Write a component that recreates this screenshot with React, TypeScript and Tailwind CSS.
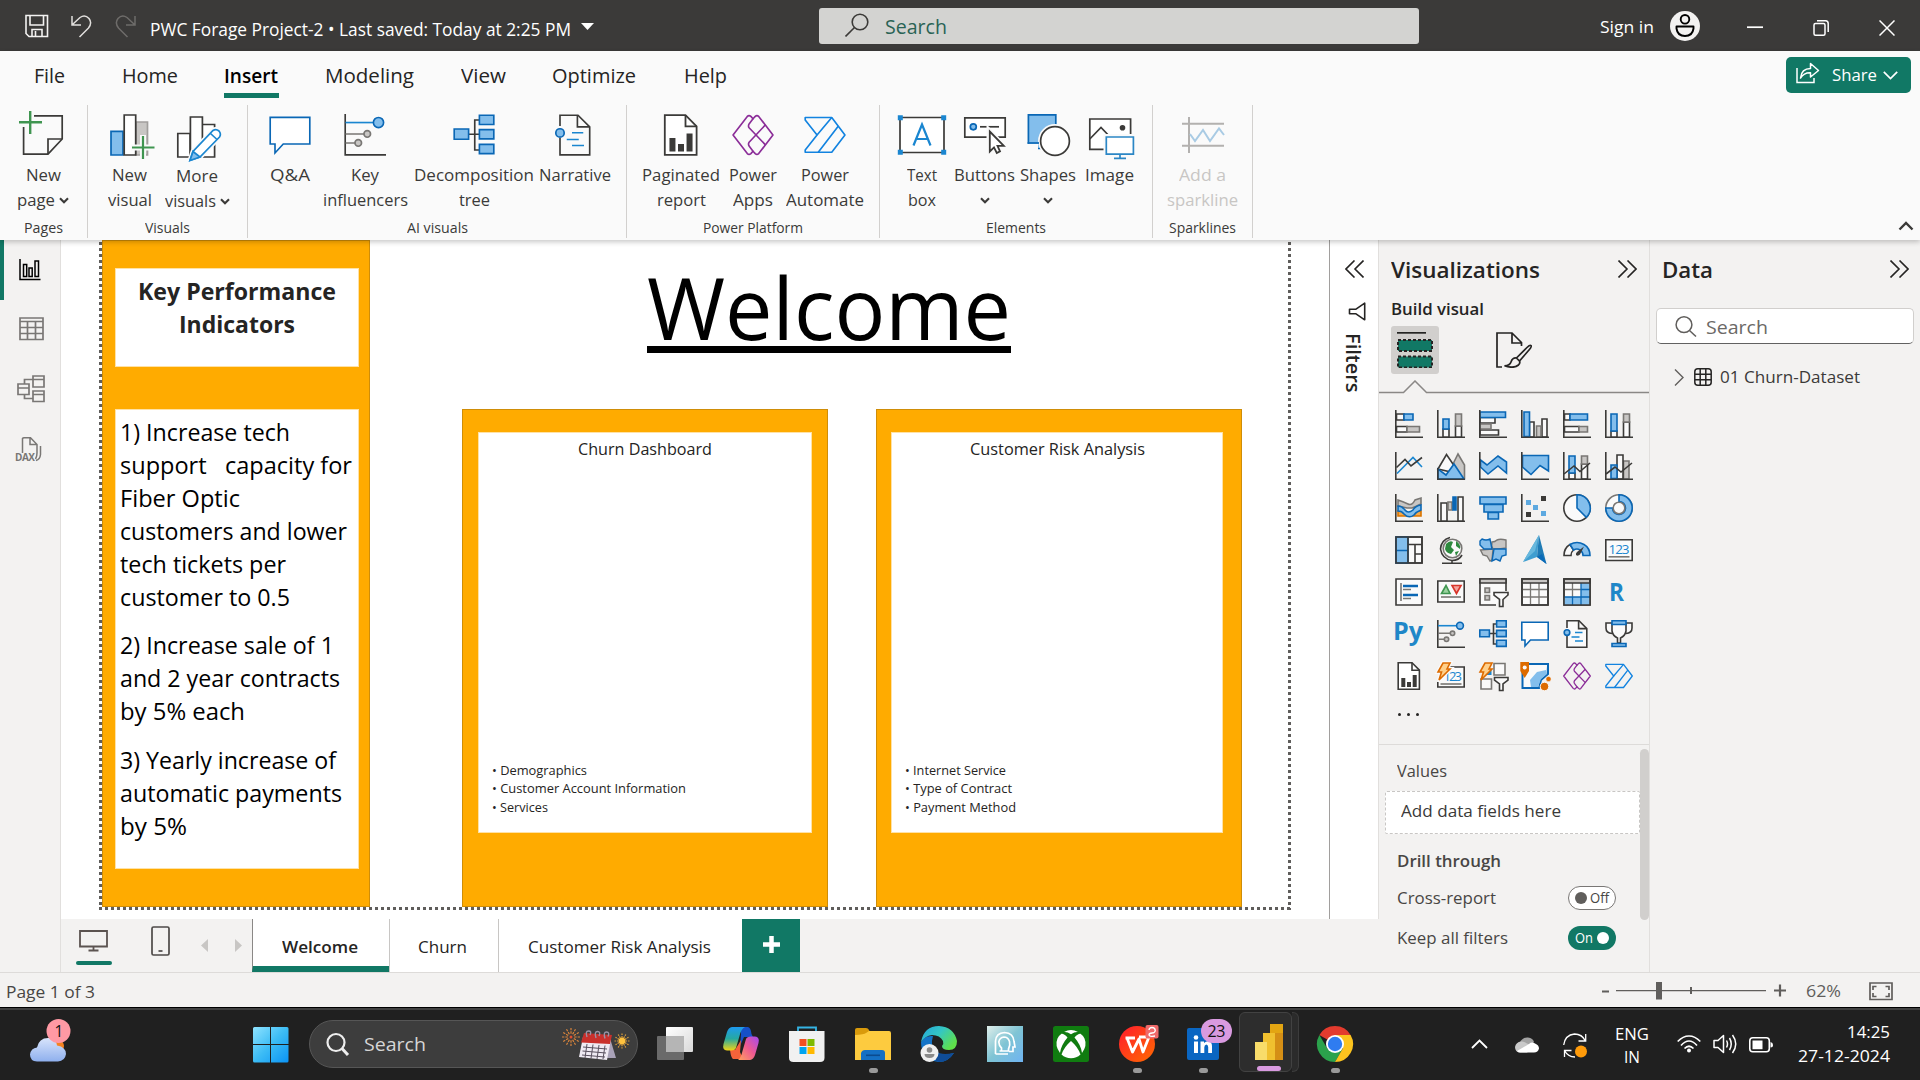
import React, { useLayoutEffect, useRef, useState } from "react";

const K = "#3b3a38";
const B = "#0a67b5";
const F = "#83beec";
const G = "#797774";
const GF = "#c8c6c4";
const W = "#fafafa";

/* Text condensed to a given width in pixels. */
function T({ w, className = "", children }: { w: number; className?: string; children: React.ReactNode }) {
  const ref = useRef<HTMLSpanElement>(null);
  const [scale, setScale] = useState(1);
  useLayoutEffect(() => {
    if (ref.current) {
      const natural = ref.current.getBoundingClientRect().width;
      if (natural > 0) setScale(w / natural);
    }
  }, []);
  return (
    <span className={"block shrink-0 whitespace-pre " + className} style={{ width: w }}>
      <span ref={ref} className="inline-block origin-left" style={{ transform: `scaleX(${scale})` }}>
        {children}
      </span>
    </span>
  );
}

type IconProps = { size?: number; sw?: number };

function Svg({ size = 28, sw = 1.6, children }: IconProps & { children: React.ReactNode }) {
  return (
    <svg width={size} height={size} viewBox="0 0 28 28" fill="none" stroke={K} strokeWidth={sw} className="block shrink-0 overflow-visible">
      {children}
    </svg>
  );
}

const axis = <path d="M.8 0V27.2H28" />;

/* ---- icons shared by the ribbon and the visual gallery ---- */
function QnA(p: IconProps) {
  return (
    <Svg {...p}>
      <path d="M.8 2.2H27.2V20H9.5L4 26V20H.8Z" stroke={B} fill="#fff" />
    </Svg>
  );
}
function KeyInfluencers(p: IconProps) {
  return (
    <Svg {...p}>
      {axis}
      <path d="M1 5.7H20" stroke="#1a86d0" />
      <path d="M1 13.3H14M1 19.3H8" stroke={G} />
      <circle cx="23" cy="5.7" r="3.4" stroke={B} fill={F} />
      <circle cx="15.5" cy="13.3" r="2.2" stroke={G} fill={GF} />
      <circle cx="9.5" cy="19.3" r="2.2" stroke={G} fill={GF} />
    </Svg>
  );
}
function Decomposition(p: IconProps) {
  return (
    <Svg {...p}>
      <path d="M10 13.5H18M18 4H14.5V24H18" />
      <g stroke={B} fill={F}>
        <path d="M.8 10H10.4V16.8H.8ZM17.6.8H27.2V7H17.6ZM17.6 10.4H27.2V16.6H17.6ZM17.6 20.2H27.2V26.4H17.6Z" />
      </g>
    </Svg>
  );
}
function Narrative(p: IconProps) {
  return (
    <Svg {...p}>
      <path d="M4 8V.8H16L23.8 8.6V27.2H4V16" fill={W} />
      <path d="M15.6.8V8.6H23.8" />
      <path d="M12 12.5H19.5M8.5 17H16.5M12 21H20" stroke="#1a86d0" />
      <circle cx="4" cy="12.6" r="2.8" stroke={B} fill={F} />
    </Svg>
  );
}
function Paginated(p: IconProps) {
  return (
    <Svg {...p}>
      <path d="M3.2.8H17L24.4 8.2V27.2H3.2Z" fill="#fff" />
      <path d="M17 .8V8.2H24.4" />
      <path d="M6.3 16H10.3V25H6.3ZM12 20H16V25H12ZM17.7 13H21.7V25H17.7Z" fill={K} stroke="none" />
    </Svg>
  );
}
function PowerApps(p: IconProps) {
  return (
    <Svg {...p}>
      <g stroke="#8b2d98" strokeLinejoin="round">
        <path d="M.7 14 10.2 1.6Q11.3.5 12.6 1.6L14 3.2 15.5 1.6Q16.6.5 17.8 1.6L27.3 14 17.8 26.4Q16.6 27.5 15.5 26.4L14 24.8 12.6 26.4Q11.3 27.5 10.2 26.4Z" />
        <path d="M14 3.2 11.4 6.6Q10.6 8 11.4 9.2L22.3 20.6M14 24.8 11.4 21.4Q10.6 20 11.4 18.8L22.3 7.2" />
      </g>
    </Svg>
  );
}
function PowerAutomate(p: IconProps) {
  return (
    <Svg {...p}>
      <g stroke="#1283e0" strokeLinejoin="round">
        <path d="M.8 2.3H18.5L27.3 14 18.5 25.5H.8V24L8.7 14 .8 4Z" />
        <path d="M8.7 14 18.5 2.3M9.5 25.5 22.8 8.2" />
      </g>
    </Svg>
  );
}

/* ---- ribbon icons, 48px ---- */
function R48({ children }: { children: React.ReactNode }) {
  return (
    <svg width="48" height="48" viewBox="0 0 48 48" fill="none" stroke={K} strokeWidth="1.7" className="block overflow-visible">
      {children}
    </svg>
  );
}
const at42 = (icon: React.ReactNode) => <div className="pt-[3px]">{icon}</div>;

const NewPage = () => (
  <R48>
    <path d="M15 4.8H43.2V28L29 43.2H4.6V16" />
    <path d="M29 43V28H43" />
    <path d="M11.2 0V23M0 11.3H23" stroke="#3f9550" strokeWidth="2.4" />
  </R48>
);
const NewVisual = () => (
  <R48>
    <path d="M30 11H41.5V44H30Z" stroke="#a19f9d" fill={GF} />
    <path d="M5 20.3H17V44H5Z" stroke={B} fill={F} />
    <path d="M18.2 4H29.7V44H18.2Z" fill="#fff" />
    <path d="M37 24V49M25 36.5H49" stroke={W} strokeWidth="6" />
    <path d="M37 25V48M26 36.5H48.5" stroke="#3f9550" strokeWidth="2.2" />
  </R48>
);
const MoreVisuals = () => (
  <R48>
    <path d="M4.8 21.5H17V45H4.8ZM17.4 5H29.4V45H17.4ZM29.4 12.5H41.6V45H29.4" fill="#fff" />
    <path d="M17 48.5 20 39.5 40 18.5Q43 16.5 46 19 48.5 22 46.5 25L27 45Z" stroke={W} strokeWidth="5" />
    <path d="M17 48.5 20 39.5 40 18.5Q43 16.5 46 19 48.5 22 46.5 25L27 45Z" stroke="#1a86d0" fill="#fff" />
    <path d="M17 48.5 20 39.5 27 45Z" fill={F} stroke="#1a86d0" />
    <path d="M37.5 21.5 44 27.5" stroke="#1a86d0" />
  </R48>
);
const TextBox = () => (
  <R48>
    <path d="M2 6.5H46V41.5H2Z" fill="#fff" />
    <path d="M-.2 4.3H4.8V9.3H-.2ZM43.2 4.3H48.2V9.3H43.2ZM-.2 38.7H4.8V43.7H-.2ZM43.2 38.7H48.2V43.7H43.2Z" fill="#1a86d0" stroke="none" />
    <path d="M15.5 34.5 24 13.5 32.5 34.5M18.3 28H29.7" stroke="#1a86d0" strokeWidth="2.2" />
  </R48>
);
const ButtonsIcon = () => (
  <R48>
    <path d="M3.8 6.8H44.2V26.2H3.8Z" fill="#fff" />
    <circle cx="12.3" cy="15.8" r="3" stroke={B} fill={F} />
    <path d="M19 15.8H38" />
    <path d="M28 19.5V41.5L33 36.8 36 42.5 39.5 40.5 36.8 35.2H43Z" fill="#fff" stroke={W} strokeWidth="5" />
    <path d="M28.8 20.5V40.5L33 36.4 35.8 42 39 40.4 36.5 34.8H42.8Z" fill="#fff" strokeWidth="1.8" />
  </R48>
);
const ShapesIcon = () => (
  <R48>
    <path d="M4.4 3.8H31.8V37.5H4.4Z" stroke={B} fill={F} />
    <circle cx="31" cy="30" r="14.4" fill="#fff" stroke={W} strokeWidth="5" />
    <path d="M0 32.8H14V42H0Z" fill={W} stroke="none" />
    <path d="M3.6 32H15" stroke={B} />
    <circle cx="31" cy="30" r="14.4" fill="#fff" />
  </R48>
);
const ImageIcon = () => (
  <R48>
    <path d="M3.8 8H44.6V38.3H3.8Z" fill="#fff" />
    <path d="M3.8 28 15 16.5 27 29" />
    <circle cx="36.5" cy="16.7" r="2.8" fill={K} stroke="none" />
    <path d="M20 25.5H47.5V43.5H20Z" fill="#fff" stroke={W} strokeWidth="5" />
    <path d="M20.3 26H47.4V43.2H20.3ZM34 43V47M28 47.3H40" fill="#fff" stroke="#2b86c5" />
  </R48>
);
const Sparkline = () => (
  <R48>
    <path d="M10 6V42M3 12.7H45M3 34.7H45" stroke="#b3b1af" strokeWidth="2" />
    <path d="M11 23 16 30 24 19 31 30 40 17.5 45 24" stroke="#a9cbe4" strokeWidth="2" />
  </R48>
);

function Chev({ className = "" }: { className?: string }) {
  return (
    <svg width="10" height="7" viewBox="0 0 10 7" fill="none" stroke={K} strokeWidth="2.1" className={"block shrink-0 " + className}>
      <path d="M1 1.2 5 5.2 9 1.2" />
    </svg>
  );
}

type ItemProps = {
  className: string;
  icon: React.ReactNode;
  a: string;
  aw: number;
  b?: string;
  bw?: number;
  chev?: boolean;
  low?: boolean;
};
function Item({ className, icon, a, aw, b, bw = 0, chev, low }: ItemProps) {
  return (
    <div className={"flex shrink-0 flex-col items-center text-[17px] leading-6 " + (low ? "pt-px " : "") + className}>
      <div className="flex h-[52px] w-12 justify-center">{icon}</div>
      <T w={aw}>{a}</T>
      <div className="flex h-[25px] items-center">
        {b && <T w={bw}>{b}</T>}
        {chev && <Chev className={b ? "mt-[2px] ml-1" : "mt-[2px]"} />}
      </div>
    </div>
  );
}
function Group({ className, label, lw, children }: { className: string; label: string; lw: number; children: React.ReactNode }) {
  return (
    <div className={"flex h-[133px] shrink-0 flex-col items-center border-r border-[#d2d0ce] " + className}>
      <div className="flex h-[114px] w-full pt-[6px]">{children}</div>
      <T w={lw} className="text-[14.5px] leading-5">{label}</T>
    </div>
  );
}

function TitleBar() {
  return (
    <header className="flex h-[51px] items-start bg-[#3b3a39] text-white">
      <svg width="24" height="24" viewBox="0 0 24 24" className="mt-[14px] ml-[25px] shrink-0" fill="none" stroke="#f3f2f1" strokeWidth="1.6">
        <path d="M1 1.5H22.5V22.5H4L1 19.5ZM5 1.5V11H18.5V1.5M7 22.5V15.5H17V22.5M10.5 17V22" />
      </svg>
      <svg width="22" height="24" viewBox="0 0 22 24" className="mt-[14px] ml-[22px] shrink-0" fill="none" stroke="#e1dfdd" strokeWidth="1.5">
        <path d="M1 2V11H10M1.5 10.5 9 3.5Q14 0 18 4.5 21.5 9 17.5 14L8.5 23" />
      </svg>
      <svg width="22" height="24" viewBox="0 0 22 24" className="mt-[14px] ml-[21px] shrink-0" fill="none" stroke="#6e6c6a" strokeWidth="1.5">
        <path d="M21 2V11H12M20.5 10.5 13 3.5Q8 0 4 4.5.5 9 4.5 14L13.5 23" />
      </svg>
      <T w={421} className="mt-[17px] ml-[14px] text-[17.5px] leading-6">PWC Forage Project-2 • Last saved: Today at 2:25 PM</T>
      <svg width="13" height="8" viewBox="0 0 13 8" className="mt-[23px] ml-[10px] shrink-0"><path d="M0 0H13L6.5 7Z" fill="#fff" /></svg>
      <div className="mt-2 ml-[225px] flex h-9 w-[600px] shrink-0 rounded-[3px] bg-[#d3d3d1]">
        <svg width="24" height="24" viewBox="0 0 24 24" className="mt-[5px] ml-[26px]" fill="none" stroke={K} strokeWidth="1.6">
          <circle cx="15" cy="9" r="7.8" /><path d="M9.5 14.5.5 23.5" />
        </svg>
        <T w={62} className="mt-[7px] ml-[16px] text-[19.5px] leading-6 text-[#2a6355]">Search</T>
      </div>
      <T w={54} className="mt-[15px] ml-[181px] text-[17px] leading-6">Sign in</T>
      <svg width="30" height="30" viewBox="0 0 30 30" className="mt-[11px] ml-4 shrink-0" fill="none" stroke="#000" strokeWidth="1.9">
        <circle cx="15" cy="15" r="15" fill="#f3f2f1" stroke="none" />
        <circle cx="15" cy="8.3" r="4.3" />
        <path d="M6.5 15.5H23.5V17.5Q22.5 25 15 25T6.5 17.5Z" strokeLinejoin="round" />
      </svg>
      <svg width="16" height="16" viewBox="0 0 16 16" className="mt-5 ml-[47px] shrink-0"><path d="M0 7.2H16" stroke="#fff" strokeWidth="1.7" /></svg>
      <svg width="16" height="16" viewBox="0 0 16 16" className="mt-5 ml-[50px] shrink-0" fill="none" stroke="#fff" strokeWidth="1.5">
        <rect x="1" y="3.5" width="11" height="11.7" rx="1.5" /><path d="M4 .8H12.5Q15.2 1 15.2 3.5V12" />
      </svg>
      <svg width="16" height="16" viewBox="0 0 16 16" className="mt-5 ml-[50px] shrink-0"><path d="M.5.5 15.5 15.5M15.5.5.5 15.5" stroke="#fff" strokeWidth="1.5" /></svg>
    </header>
  );
}

function Tabs() {
  return (
    <nav className="flex h-[54px] items-start pt-[11px] text-[19.5px] leading-7 text-[#252423]">
      <T w={31} className="ml-[34px]">File</T>
      <T w={56} className="ml-[57px]">Home</T>
      <div className="ml-[46px]">
        <T w={54} className="font-semibold text-black">Insert</T>
        <div className="mt-[3px] h-[5px] w-[55px] bg-[#117865]" />
      </div>
      <T w={89} className="ml-[46px]">Modeling</T>
      <T w={45} className="ml-[47px]">View</T>
      <T w={84} className="ml-[46px]">Optimize</T>
      <T w={43} className="ml-[48px]">Help</T>
      <div className="-mt-[5px] mr-[9px] ml-auto flex h-9 w-[125px] items-center rounded-[5px] bg-[#117865] text-white">
        <svg width="24" height="22" viewBox="0 0 24 22" className="mb-1 ml-[10px]" fill="none" stroke="#fff" strokeWidth="1.5">
          <path d="M1 6V20.5H18V16" /><path d="M4.5 16Q5.5 6.5 14.5 6.5V1.5L22.5 8.5 14.5 15V10.8Q8 10.5 4.5 16Z" strokeLinejoin="round" />
        </svg>
        <T w={45} className="ml-3 text-[17px]">Share</T>
        <svg width="15" height="9" viewBox="0 0 15 9" className="ml-[6px]" fill="none" stroke="#fff" strokeWidth="1.7"><path d="M.8.8 7.5 7.5 14.2.8" /></svg>
      </div>
    </nav>
  );
}

function Ribbon() {
  return (
    <div className="relative z-10 flex h-[189px] flex-col bg-[#fafafa] text-[#3b3a39] shadow-[0_2px_5px_rgba(0,0,0,0.22)]">
      <Tabs />
      <div className="flex">
        <Group className="w-[88px]" label="Pages" lw={39}>
          <Item className="w-[86px]" icon={<NewPage />} a="New" aw={35} b="page" bw={38} chev />
        </Group>
        <Group className="w-[160px]" label="Visuals" lw={45}>
          <Item className="ml-2 w-[67px]" icon={<NewVisual />} a="New" aw={35} b="visual" bw={44} />
          <Item className="w-[68px]" icon={<MoreVisuals />} a="More" aw={42} b="visuals" bw={51} chev low />
        </Group>
        <Group className="w-[379px]" label="AI visuals" lw={61}>
          <Item className="ml-4 w-[51px]" icon={at42(<QnA size={42} sw={1.1} />)} a="Q&A" aw={40} />
          <Item className="w-[100px]" icon={at42(<KeyInfluencers size={42} sw={1.1} />)} a="Key" aw={28} b="influencers" bw={85} />
          <Item className="w-[118px]" icon={at42(<Decomposition size={42} sw={1.1} />)} a="Decomposition" aw={120} b="tree" bw={31} />
          <Item className="w-[84px]" icon={at42(<Narrative size={42} sw={1.1} />)} a="Narrative" aw={72} />
        </Group>
        <Group className="w-[253px]" label="Power Platform" lw={100}>
          <Item className="ml-[9px] w-[90px]" icon={at42(<Paginated size={42} sw={1.2} />)} a="Paginated" aw={78} b="report" bw={49} />
          <Item className="w-[54px]" icon={at42(<PowerApps size={42} sw={1.1} />)} a="Power" aw={48} b="Apps" bw={40} />
          <Item className="w-[90px]" icon={at42(<PowerAutomate size={42} sw={1.1} />)} a="Power" aw={48} b="Automate" bw={78} />
        </Group>
        <Group className="w-[273px]" label="Elements" lw={60}>
          <Item className="ml-4 w-[52px]" icon={<TextBox />} a="Text" aw={30} b="box" bw={28} />
          <Item className="w-[73px]" icon={<ButtonsIcon />} a="Buttons" aw={61} chev />
          <Item className="w-[54px]" icon={<ShapesIcon />} a="Shapes" aw={56} chev />
          <Item className="w-[69px]" icon={<ImageIcon />} a="Image" aw={49} />
        </Group>
        <Group className="w-[100px]" label="Sparklines" lw={67}>
          <Item className="w-[99px] text-[#c8c6c4]" icon={<Sparkline />} a="Add a" aw={47} b="sparkline" bw={71} />
        </Group>
        <svg width="16" height="10" viewBox="0 0 16 10" className="mt-[116px] mr-[6px] ml-auto" fill="none" stroke={K} strokeWidth="2.4"><path d="M1.5 8.5 8 2 14.5 8.5" /></svg>
      </div>
    </div>
  );
}

function Rail() {
  return (
    <aside className="flex w-[61px] shrink-0 border-r border-[#e1dfdd] bg-[#f3f2f1]">
      <div className="h-[60px] w-1 bg-[#117865]" />
      <div className="ml-3 flex w-[30px] flex-col items-center">
        <svg width="22" height="22" viewBox="0 0 22 22" className="mt-[19px] mr-[2px]" fill="none" stroke="#000" strokeWidth="1.5">
          <path d="M1 0V20.5H21.5M4.5 5.5H7.7V17.5H4.5ZM10 9H13.2V17.5H10ZM16 2H19.5V17.5H16Z" />
        </svg>
        <svg width="25" height="24" viewBox="0 0 25 24" className="mt-[36px]" fill="none" stroke="#797775" strokeWidth="1.7">
          <path d="M1 1H24V22.5H1ZM1 4.5H24M1 10.5H24M1 16.5H24M8.5 4.5V22.5M16.5 4.5V22.5" />
        </svg>
        <svg width="28" height="28" viewBox="0 0 28 28" className="mt-[34px]" fill="none" stroke="#797775" strokeWidth="1.7">
          <path d="M16 1H27V12H16ZM16 4.5H27M16 16H27V26.5H16ZM16 19.5H27M1 9H12V19.5H1ZM1 13H12M7.5 9V4.5H16M7.5 19.5V23.5H16" />
        </svg>
        <svg width="28" height="27" viewBox="0 0 28 27" className="mt-[34px] mr-1 overflow-visible" fill="none" stroke="#797775" strokeWidth="1.5">
          <path d="M7.5 16V1.5Q8 .8 9 .8H15.5L22 7.5V16Q22 19.5 20.5 22M15 1V7.5H22M25.5 9V17.5Q25 22.5 21 23.5" />
          <text x="0" y="24" fontSize="10" fontWeight="700" textLength="20" fill="#797775" stroke="none">DAX</text>
        </svg>
      </div>
    </aside>
  );
}

type CardProps = { className: string; inner: string; title: string; tw: number; bullets: [string, number][] };
function Card({ className, inner, title, tw, bullets }: CardProps) {
  return (
    <div className={"absolute top-[169px] h-[498px] border border-[#cf8d08] bg-[#ffab00] pt-[22px] " + className}>
      <div className={"flex h-[401px] flex-col items-center border border-[#ffe2a6] bg-white text-[#252423] " + inner}>
        <T w={tw} className="mt-[4px] text-[16.5px] leading-6">{title}</T>
        <div className="mt-auto mb-[16px] w-full pl-[13px] text-[13px] leading-[18.5px]">
          {bullets.map(([b, w]) => (
            <T key={b} w={w}>{"• " + b}</T>
          ))}
        </div>
      </div>
    </div>
  );
}

const kpis: [string, number][][] = [
  [["1) Increase tech", 170], ["support   capacity for", 232], ["Fiber Optic", 120], ["customers and lower", 227], ["tech tickets per", 166], ["customer to 0.5", 170]],
  [["2) Increase sale of 1", 214], ["and 2 year contracts", 220], ["by 5% each", 125]],
  [["3) Yearly increase of", 216], ["automatic payments", 222], ["by 5%", 67]],
];

function Canvas() {
  return (
    <div className="relative h-[679px] overflow-hidden bg-white">
      <div className="absolute top-[2px] left-[38px] h-[668px] w-[3px] bg-[repeating-linear-gradient(180deg,#5f5d5b_0_3px,transparent_3px_6px)]" />
      <div className="absolute top-[2px] left-[1227px] h-[668px] w-[3px] bg-[repeating-linear-gradient(180deg,#5f5d5b_0_3px,transparent_3px_6px)]" />
      <div className="absolute top-[667px] left-[38px] h-[3px] w-[1192px] bg-[repeating-linear-gradient(90deg,#5f5d5b_0_3px,transparent_3px_6px)]" />

      <div className="absolute top-0 left-[41px] h-[667px] w-[268px] border border-[#cf8d08] bg-[#ffab00] pt-[27px] pl-3">
        <div className="flex h-[99px] w-[244px] flex-col items-center border border-[#ffe2a6] bg-white pt-[5px] text-[24px] leading-[33px] font-bold text-[#252423]">
          <T w={198}>Key Performance</T>
          <T w={116}>Indicators</T>
        </div>
        <div className="mt-[42px] h-[460px] w-[244px] border border-[#ffe2a6] bg-white pt-[6px] pl-[4px] text-[24px] leading-[32.9px] text-black">
          {kpis.map((lines, i) => (
            <div key={i} className="mb-4">
              {lines.map(([t, w]) => (
                <T key={t} w={w}>{t}</T>
              ))}
            </div>
          ))}
        </div>
      </div>

      <div className="absolute top-[12px] left-[586px] flex flex-col">
        <T w={364} className="text-[86px] leading-[110px] text-black">Welcome</T>
        <div className="-mt-[16px] h-[7px] w-[364px] bg-black" />
      </div>

      <Card className="left-[401px] w-[366px] pl-[15px]" inner="w-[334px]" title="Churn Dashboard" tw={134} bullets={[["Demographics", 95], ["Customer Account Information", 194], ["Services", 56]]} />
      <Card className="left-[815px] w-[366px] pl-[14px]" inner="w-[332px]" title="Customer Risk Analysis" tw={175} bullets={[["Internet Service", 101], ["Type of Contract", 107], ["Payment Method", 111]]} />
    </div>
  );
}

function PageTabs() {
  return (
    <div className="flex h-[53px] bg-[#f3f2f1] text-[17px] leading-6 text-[#252423]">
      <div className="ml-[15px] flex w-9 flex-col items-center">
        <svg width="29" height="22" viewBox="0 0 29 22" className="mt-[11px] mr-[2px]" fill="none" stroke="#5b5350" strokeWidth="1.8">
          <path d="M1 1H28V16.5H1ZM14.5 16.5V20M9.5 20.5H19.5" />
        </svg>
        <div className="mt-[9px] h-1 w-9 rounded-sm bg-[#117865]" />
      </div>
      <svg width="19" height="30" viewBox="0 0 19 30" className="mt-[7px] ml-[39px]" fill="none" stroke="#4d4a48" strokeWidth="1.7">
        <rect x="1" y="1" width="17" height="28" rx="1.5" /><path d="M7.5 25H11.5" />
      </svg>
      <svg width="8" height="13" viewBox="0 0 8 13" className="mt-[20px] ml-[31px]"><path d="M7 0V13L0 6.5Z" fill="#c8c6c4" /></svg>
      <svg width="8" height="13" viewBox="0 0 8 13" className="mt-[20px] ml-[25px]"><path d="M1 0V13L8 6.5Z" fill="#c8c6c4" /></svg>
      <div className="ml-[10px] flex w-[137px] border-b-[6px] border-l border-b-[#117865] border-l-[#8a8886] bg-white pt-4 pl-[29px] font-semibold">
        <T w={76}>Welcome</T>
      </div>
      <div className="flex w-[109px] border-l border-[#c8c6c4] bg-white pt-4 pl-[28px]"><T w={49}>Churn</T></div>
      <div className="flex w-[244px] border-l border-[#c8c6c4] bg-white pt-4 pl-[29px]"><T w={183}>Customer Risk Analysis</T></div>
      <div className="flex w-[58px] justify-center bg-[#117865] pt-[17px]">
        <svg width="17" height="17" viewBox="0 0 17 17"><path d="M8.5 0V17M0 8.5H17" stroke="#fff" strokeWidth="4.5" /></svg>
      </div>
    </div>
  );
}

function DoubleChevron({ className = "", flip }: { className?: string; flip?: boolean }) {
  return (
    <svg width="19" height="18" viewBox="0 0 19 18" className={"shrink-0 " + className} fill="none" stroke="#252423" strokeWidth="1.6">
      <path d={flip ? "M9.5.5 1 9 9.5 17.5M18.5.5 10 9 18.5 17.5" : "M.5.5 9 9 .5 17.5M9.5.5 18 9 9.5 17.5"} />
    </svg>
  );
}

function Filters() {
  return (
    <div className="flex h-[679px] w-[50px] shrink-0 flex-col items-center border-r border-l border-r-[#e1dfdd] border-l-[#a19f9d] bg-white">
      <DoubleChevron flip className="mt-5" />
      <svg width="18" height="19" viewBox="0 0 18 19" className="mt-6 ml-[5px]" fill="none" stroke="#252423" strokeWidth="1.6">
        <path d="M16.7 1.2V17.8L8 11.8H1.5V7.2H8Z" strokeLinejoin="round" />
      </svg>
      <div className="mt-3 mr-[2px] text-[20px] leading-7 font-semibold text-[#252423] [writing-mode:vertical-rl]">Filters</div>
    </div>
  );
}

const spark = "M6 1H13L10 7H13L2 18 4.5 10H1Z";

const gallery: React.ReactNode[] = [
  <Svg>{axis}<path d="M1.5 4H9V10H1.5ZM1.5 16.5H12V22H1.5Z" fill={W} /><path d="M9 4H18V10H9Z" stroke={B} fill={F} /><path d="M12 16.5H24.5V22H12Z" stroke={G} fill={GF} /></Svg>,
  <Svg>{axis}<path d="M6 19H12V27H6ZM18.5 16H24.5V27H18.5Z" fill={W} /><path d="M6 9H12V19H6Z" stroke={B} fill={F} /><path d="M18.5 4H24.5V16H18.5Z" stroke={G} fill={GF} /></Svg>,
  <Svg><path d="M1 7.5H16V13H1ZM1 20H19.5V25H1Z" fill={W} /><path d="M1 14H12V19H1Z" stroke={G} fill={GF} /><path d="M1 2H26.5V7.5H1Z" stroke={B} fill={F} />{axis}</Svg>,
  <Svg><path d="M8.5 12H13V27H8.5ZM21 9H26V27H21Z" fill={W} /><path d="M15.5 16H20V27H15.5Z" stroke={G} fill={GF} /><path d="M3 2H8.5V26.5H3Z" stroke={B} fill={F} />{axis}</Svg>,
  <Svg>{axis}<path d="M1.5 4H7V10H1.5ZM1.5 16.5H16V22H1.5Z" fill={W} /><path d="M7 4H24.5V10H7Z" stroke={B} fill={F} /><path d="M16 16.5H24.5V22H16Z" stroke={G} fill={GF} /></Svg>,
  <Svg>{axis}<path d="M6 21H12V27H6ZM18.5 12H24.5V27H18.5Z" fill={W} /><path d="M6 4H12V21H6Z" stroke={B} fill={F} /><path d="M18.5 4H24.5V12H18.5Z" stroke={G} fill={GF} /></Svg>,

  <Svg>{axis}<path d="M2 21.5 18 5.5 27 15" stroke="#1a86d0" /><path d="M1.5 15.5 10 7.5 16 14 27 5.5" /></Svg>,
  <Svg><path d="M16 12 21 2 27.5 13V27" stroke={G} fill={GF} /><path d="M1 17 9.5 2.5 18 15 14 20Z" fill={W} /><path d="M1 27V17L9 23 17 12 27 27Z" stroke={B} fill={F} /><path d="M0 27.2H28M.8 16V27" /></Svg>,
  <Svg><path d="M1.5 8 8 13 19 4 27.5 10V21L19 14 9 22 1.5 15Z" stroke={B} fill={F} />{axis}</Svg>,
  <Svg><path d="M1.5 3.5H27.5V19L19 13.5 10 22.5 1.5 15Z" stroke={B} fill={F} />{axis}</Svg>,
  <Svg><path d="M6 21H12V27H6ZM18.5 12H24.5V27H18.5Z" fill={W} /><path d="M6 4H12V21H6Z" stroke={B} fill={F} /><path d="M18.5 4H24.5V12H18.5Z" stroke={G} fill={GF} />{axis}<path d="M1 22 11 14 17 19.5 27 11" /></Svg>,
  <Svg><path d="M18.5 9H24V27H18.5Z" stroke={G} fill={GF} /><path d="M12 3H18V27H12Z" fill={W} /><path d="M6 13H12V26.5H6Z" stroke={B} fill={F} />{axis}<path d="M1 22 10 15 16 20 27 11" /></Svg>,

  <Svg>{axis}<path d="M3 17H9Q12 17 14 20T20 17H26V22H3Z" stroke="#d97400" fill="#f7a94a" /><path d="M3 6Q9 8 13 10T20 6L26 4V10Q20 13 17 14H12L3 12Z" stroke={G} fill={GF} /><path d="M3 12Q7 12 10 16T18 16Q20 12 26 11V16Q21 18 19 21 14 25 9 20 7 17 3 17Z" stroke={B} fill={F} /></Svg>,
  <Svg>{axis}<path d="M4 9H10V27H4ZM21 3H26V27H21Z" fill={W} /><path d="M11 8H15V16H11Z" stroke={G} fill={GF} /><path d="M16 3H19V16H16Z" stroke={B} fill={B} /></Svg>,
  <Svg><g stroke={B} fill={F}><path d="M1 3H27V10H1ZM5 10.5H24V18H5ZM9 18.5H19.5V25H9Z" /></g></Svg>,
  <Svg>{axis}<g stroke="none"><path d="M20 2H25V7H20ZM5 18H10V23H5Z" fill={K} /><path d="M5 6H10V11H5ZM12 11H17V16H12ZM20 17H25V22H20Z" fill="#5da9e0" /></g></Svg>,
  <Svg><circle cx="14" cy="14" r="13.2" fill={W} /><path d="M14 14V.8A13.2 13.2 0 0 1 23.3 23.3Z" stroke={B} fill={F} /></Svg>,
  <Svg><circle cx="14" cy="14" r="13.2" stroke={G} fill={W} /><path d="M14 .8A13.2 13.2 0 1 1 .8 14H7.5A6.5 6.5 0 1 0 14 7.5Z" stroke={B} fill={F} /><circle cx="14" cy="14" r="5.8" fill={W} stroke={G} /></Svg>,

  <Svg><path d="M1 1H27V27H1Z" fill={W} /><path d="M1 1H13V27H1ZM1 14.5H13" fill={F} stroke={B} /><path d="M13 8.5H27M20 8.5V27M20 18H27M13 1V27M1 1H27V27H1Z" /></Svg>,
  <Svg><circle cx="15.5" cy="12.5" r="9.3" fill={W} stroke={G} /><path d="M9 8Q13 4 16 6L14 11 17 14 14 18Q9 17 8 13ZM19 5Q24 8 23 13L19 10ZM18 16 22 15 19 20Z" fill="#2d8a3e" stroke="none" /><path d="M13 1.5Q4 4 3.5 13 5 23 15 24.5 22 24.5 25 19M15 24V27M5 27.2H25" /></Svg>,
  <Svg sw={1.4}><path d="M13 6Q16 6 18 4 21 2.500 27 4V12L20 13H14Q12 10 13 6Z" stroke={G} fill={GF} /><path d="M1.500 14 14 13 13 24 11 25 8 20 4 19Z" stroke={G} fill={GF} /><path d="M3 3Q7 5 11 3L13 13H5L1 9V5ZM15 13H27V19L23 20 21 25 17 23 13 25Z" stroke={B} fill={F} /></Svg>,
  <Svg><g stroke="none"><path d="M18 -1 2 26 16 21Z" fill="#3f9ed0" /><path d="M18 -1 25.5 28 16 21Z" fill="#1f7bb5" /><path d="M16 21 21 18 25.5 28Z" fill="#0a6ab8" /><path d="M18-1 14 15 2 26Z" fill="#68b8dd" /></g></Svg>,
  <Svg><path d="M1 19.5Q1 12 7 8.5L10.5 14Q8 16 8 19.5Z" fill={W} /><path d="M7 8.5Q14 4.5 21 8.5 27 12 27 19.5H20Q20 16 17 14T10.5 14Z" stroke={B} fill={F} /><path d="M21 10.5 17 18.5Q15 20.5 13 19 12.5 17.5 14 16Z" fill={K} stroke="none" /></Svg>,
  <Svg><path d="M.8 3.8H27.2V24.5H.8Z" fill={W} /><text x="3.5" y="17.5" fontSize="13.5" textLength="21" stroke="none" fill="#1a86d0">123</text><path d="M3.5 20.8H24.5" stroke={G} /></Svg>,

  <Svg><path d="M1 1H27V27H1Z" fill={W} /><path d="M6 5V23" stroke={G} /><path d="M8 8H23M8 17H23" stroke={B} strokeWidth="2.4" /><path d="M8 11.5H16M8 20.5H16" stroke={G} /></Svg>,
  <Svg><path d="M.8 3H27.2V24H.8Z" fill={W} /><path d="M4.5 15.5 9 7.5 13 15.5Z" stroke="#3f9550" fill="#9ad29f" /><path d="M15 7.5H24L19.5 15.5Z" stroke="#d8352a" fill="#f3a39d" /><path d="M4 19H24" stroke={G} /></Svg>,
  <Svg><path d="M27 13V1H1V27H17" fill={W} /><path d="M1 1H27V5H1Z" fill={GF} /><path d="M6 10H10.5V14.5H6ZM6 17.5H10.5V22H6Z" stroke={G} fill={GF} /><path d="M15 14.5H29V17L24 21.5V28.5H20.5V21.5L15 17Z" fill={W} /></Svg>,
  <Svg><path d="M1 1H27V27H1Z" fill={W} /><path d="M1 11.5H27M1 19H27M9.5 5V27M18 5V27" stroke={G} strokeWidth="1.3" /><path d="M1 1H27V5H1Z" fill={GF} /><path d="M1 1H27V27H1Z" /></Svg>,
  <Svg><path d="M1 1H27V27H1Z" fill={W} /><path d="M18 5H27V27H1V19H18Z" fill={F} stroke="none" /><path d="M1 11.5H18M9.5 5V19" stroke={G} strokeWidth="1.3" /><path d="M1 19H27M18 5V27M18 11.5H27M9.5 19V27" stroke={B} strokeWidth="1.3" /><path d="M1 1H27V5H1Z" fill={GF} /><path d="M1 1H27V27H1Z" /></Svg>,
  <Svg><text x="4" y="23" fontSize="24.5" fontWeight="700" textLength="15" lengthAdjust="spacingAndGlyphs" fill="#1f87c8" stroke="none">R</text></Svg>,

  <Svg><text x="-2" y="20" fontSize="25" fontWeight="700" textLength="30" lengthAdjust="spacingAndGlyphs" fill="#1f87c8" stroke="none">Py</text></Svg>,
  <KeyInfluencers />,
  <Decomposition />,
  <QnA />,
  <Narrative />,
  <Svg><path d="M7 3H1V8Q1 13 7 13.5M21 3H27V8Q27 13 21 13.5M7 3V11Q8 16 12.5 18V23H15.5V18Q20 16 21 11V3" fill={W} /><path d="M7 .8H21V4.5H7ZM7 23.5H21V26.5H7Z" stroke={B} fill={F} /></Svg>,

  <Paginated />,
  <Svg><path d="M10 5H27.2V25H.8V20" fill={W} /><text x="6.5" y="19" fontSize="13" textLength="18.5" stroke="none" fill="#1a86d0">123</text><path d="M3.5 22H24.5" stroke={G} /><path d={spark} fill="#ffd08a" stroke={W} strokeWidth="4" /><path d={spark} fill="#ffd08a" stroke="#dd6b00" /></Svg>,
  <Svg><path d="M15 1.5H26V13H15ZM2 17H12.5V27H2Z" stroke={G} fill={W} /><path d="M7 8H12.5V13H4Z" stroke="none" fill="#1a86d0" /><path d="M15.5 15.5H29V18L24 22V28.5H20.5V22L15.5 18Z" fill={W} /><path d={spark} fill="#ffd08a" stroke="#dd6b00" /></Svg>,
  <Svg><path d="M1.5 2H27V12L20 18 18 26H1.5Z" fill={W} stroke={B} strokeWidth="2" /><path d="M25 4V8L16 10 9 18 10 25H17L20 17 26 12Z" fill={F} stroke="none" /><path d="M-.7 0H8V9L3.7 16-.7 9Z" fill="#dd6b00" stroke="none" /><circle cx="3.7" cy="5.5" r="2" fill={W} stroke="none" /><circle cx="23.5" cy="24.5" r="4.3" fill="#dd6b00" stroke={W} strokeWidth="1" /><circle cx="27.5" cy="17" r="2.6" fill="#dd6b00" stroke={W} strokeWidth=".5" /></Svg>,
  <PowerApps sw={1.3} />,
  <PowerAutomate sw={1.3} />,
];

function Visualizations() {
  return (
    <section className="flex w-[271px] shrink-0 flex-col border-r border-[#e1dfdd] bg-[#f3f2f1] text-[17px] leading-6">
      <div className="flex items-start pt-[14px]">
        <T w={149} className="ml-[12px] text-[22px] leading-[30px] font-semibold text-[#252423]">Visualizations</T>
        <DoubleChevron className="mt-[6px] mr-3 ml-auto" />
      </div>
      <T w={93} className="mt-[13px] ml-[12px] font-semibold text-[#252423]">Build visual</T>
      <div className="mt-[5px] ml-3 flex">
        <div className="flex h-12 w-12 items-center justify-center rounded-[3px] bg-[#d1cfcd]">
          <svg width="36" height="36" viewBox="0 0 36 36" fill="#117865">
            <path d="M0 .8H29" stroke="#252423" strokeWidth="1.8" />
            <g stroke="#252423" strokeWidth="2" strokeDasharray="3 2">
              <path d="M1 8H35V19H1ZM1 24.5H35V35.5H1Z" />
            </g>
          </svg>
        </div>
        <svg width="36" height="36" viewBox="0 0 36 36" className="mt-[6px] ml-[57px]" fill="none" stroke="#252423" strokeWidth="1.7">
          <path d="M6 35H1V1H16L25.5 10.5V14M16 1V11H25.5" />
          <path d="M35 13.5Q34 12.5 31 15.5L20.5 26 23.5 29 33 18Q36 14.5 35 13.5ZM20.5 26Q16.5 25.5 15 30 14 33.5 8.5 33.8 18 37 22.5 33 24.5 31 23.5 29" />
        </svg>
      </div>
      <svg width="270" height="14" viewBox="0 0 270 14" className="mt-[6px] shrink-0" fill="none" stroke="#8a8886" strokeWidth="1.5"><path d="M0 12.5H24.5L36 1 47.5 12.5H270" /></svg>
      <div className="mt-4 ml-4 grid auto-rows-[42px] grid-cols-[repeat(6,42px)]">
        {gallery.map((g, i) => (
          <div key={i}>{g}</div>
        ))}
      </div>
      <div className="mt-[9px] ml-[19px] flex gap-[6px]">
        <i className="h-[3px] w-[3px] rounded-full bg-[#252423]" />
        <i className="h-[3px] w-[3px] rounded-full bg-[#252423]" />
        <i className="h-[3px] w-[3px] rounded-full bg-[#252423]" />
      </div>
      <div className="mt-7 flex flex-1 border-t border-[#dddbd9] text-[#484644]">
        <div className="w-[261px] pl-[6px]">
          <T w={50} className="mt-[14px] ml-3">Values</T>
          <div className="mt-2 flex h-[43px] w-[255px] items-center rounded-[2px] border border-dashed border-[#c8c6c4] bg-white pl-[15px]">
            <T w={160} className="mb-[3px] text-[#3b3a39]">Add data fields here</T>
          </div>
          <T w={104} className="mt-[15px] ml-3 font-semibold">Drill through</T>
          <div className="mt-[13px] ml-3 flex items-center">
            <T w={99}>Cross-report</T>
            <div className="ml-[72px] flex h-6 w-12 items-center rounded-full border border-[#797775] bg-white pl-[6px] text-[14px]">
              <div className="mr-[3px] h-3 w-3 rounded-full bg-[#605e5c]" />
              <T w={19}>Off</T>
            </div>
          </div>
          <div className="mt-4 ml-3 flex items-center">
            <T w={111}>Keep all filters</T>
            <div className="ml-[60px] flex h-6 w-12 items-center rounded-full bg-[#117865] pl-[7px] text-[14px] text-white">
              <T w={18}>On</T>
              <div className="ml-1 h-3 w-3 rounded-full bg-white" />
            </div>
          </div>
        </div>
        <div className="mt-[4px] h-[171px] w-[9px] rounded-full bg-[#d1cfcd]" />
      </div>
    </section>
  );
}

function DataPane() {
  return (
    <section className="flex flex-1 flex-col bg-[#f3f2f1]">
      <div className="flex items-start pt-[14px]">
        <T w={51} className="ml-[12px] text-[22px] leading-[30px] font-semibold text-[#252423]">Data</T>
        <DoubleChevron className="mt-[6px] mr-[11px] ml-auto" />
      </div>
      <div className="mt-6 ml-[6px] flex h-9 w-[258px] items-center rounded-[5px] border border-[#d1cfcd] border-b-[#616161] bg-white">
        <svg width="22" height="21" viewBox="0 0 22 21" className="ml-[18px]" fill="none" stroke="#605e5c" strokeWidth="1.5">
          <circle cx="9" cy="8.7" r="7.9" /><path d="M14.5 14.5 21 20.5" />
        </svg>
        <T w={62} className="mt-[2px] ml-[9px] text-[19px] text-[#6b6966]">Search</T>
      </div>
      <div className="mt-[21px] ml-[24px] flex items-center">
        <svg width="10" height="17" viewBox="0 0 10 17" fill="none" stroke="#605e5c" strokeWidth="1.4"><path d="M1 .5 9 8.5 1 16.5" /></svg>
        <svg width="18" height="18" viewBox="0 0 18 18" className="mb-px ml-[10px]" fill="none" stroke="#252423" strokeWidth="1.5">
          <rect x=".8" y=".8" width="16.4" height="16.4" rx="3" /><path d="M6.2 1V17M11.8 1V17M1 6.2H17M1 11.8H17" />
        </svg>
        <T w={140} className="ml-2 text-[17px] leading-6 text-[#3b3a39]">01 Churn-Dataset</T>
      </div>
    </section>
  );
}

function StatusBar() {
  return (
    <div className="flex h-[35px] items-start border-t border-[#dddbd9] bg-[#f3f2f1] pt-[6px] text-[17px] leading-6 text-[#484644]">
      <T w={89} className="mt-[1px] ml-[6px]">Page 1 of 3</T>
      <svg width="188" height="18" viewBox="0 0 188 18" className="mt-[3px] ml-auto" stroke="#605e5c" fill="none">
        <path d="M1 9.5H8M173 8.5H185M179 2.5V14.5" strokeWidth="2.2" />
        <path d="M15 8.7H165" strokeWidth="1.3" />
        <path d="M58 0V17.5" strokeWidth="6" /><path d="M90 5V12" strokeWidth="2" />
      </svg>
      <T w={35} className="ml-[17px] text-[#605e5c]">62%</T>
      <svg width="24" height="19" viewBox="0 0 24 19" className="mt-[3px] mr-[27px] ml-[28px]" fill="none" stroke="#605e5c" strokeWidth="1.7">
        <path d="M1 1H23V17.5H1Z" /><path d="M7.5 4.5H4V8M16.5 4.5H20V8M4 11V14.5H7.5M20 11V14.5H16.5" />
      </svg>
    </div>
  );
}

function App36({ children, className = "", running }: { children?: React.ReactNode; className?: string; running?: boolean }) {
  return (
    <div className={"flex w-[66px] shrink-0 flex-col items-center " + className}>
      <svg width="36" height="36" viewBox="0 0 36 36" className="mt-[15px] block overflow-visible">{children}</svg>
      {running && <div className="mt-[6px] h-[5px] w-[9px] rounded-full bg-[#9a9a9a]" />}
    </div>
  );
}

function burst(cx: number, cy: number, r: number, color: string) {
  const rays = Array.from({ length: 12 }, (_, i) => {
    const a = (i * Math.PI) / 6;
    return `M${cx + Math.cos(a) * r * 0.35} ${cy + Math.sin(a) * r * 0.35}L${cx + Math.cos(a) * r} ${cy + Math.sin(a) * r}`;
  });
  return <path d={rays.join("")} stroke={color} strokeWidth="1.2" strokeDasharray="2.5 1" />;
}

function Taskbar() {
  return (
    <footer className="flex h-[73px] border-t border-black bg-[#202020] text-[17px] text-white shadow-[inset_0_2px_0_#404040]">
      <svg width="42" height="48" viewBox="0 0 42 48" className="mt-[8px] ml-[29px] shrink-0">
        <defs>
          <linearGradient id="cloud" x1="0" y1="0" x2="0" y2="1"><stop offset="0" stopColor="#d8e4fb" /><stop offset="1" stopColor="#8fb0ee" /></linearGradient>
        </defs>
        <circle cx="29" cy="30" r="6" fill="#f58220" />
        <path d="M8 45.5Q1 45 1 38.5 2 32 8 31.5 10 21.5 20 22 27 23 28 29.5 37 31 37 38 36 45 29 45.5Z" fill="url(#cloud)" />
        <circle cx="29.5" cy="15" r="12" fill="#ff99a4" />
        <text x="25.5" y="20.5" fontSize="15.5" fill="#111">1</text>
      </svg>
      <svg width="36" height="36" viewBox="0 0 36 36" className="mt-[19px] ml-[182px] shrink-0">
        <defs><linearGradient id="win" x1="0" y1="0" x2="1" y2="1"><stop offset="0" stopColor="#8fe3ff" /><stop offset=".5" stopColor="#3cbcf5" /><stop offset="1" stopColor="#0a93f5" /></linearGradient></defs>
        <path d="M0 1.5Q0 0 1.5 0H17V17H0ZM18 0H34Q35.5 0 35.5 1.5V17H18ZM0 18H17V35.5H1.5Q0 35.5 0 34ZM18 18H35.5V34Q35.5 35.5 34 35.5H18Z" fill="url(#win)" />
      </svg>
      <div className="mt-3 ml-[20px] flex h-12 w-[329px] shrink-0 items-center rounded-full border border-[#565656] bg-[#3d3d3d]">
        <svg width="24" height="24" viewBox="0 0 24 24" className="mb-px ml-[16px]" fill="none" stroke="#eee" strokeWidth="2.2"><circle cx="10" cy="10.5" r="8.5" /><path d="M16 16.5 22 23" strokeWidth="3" /></svg>
        <T w={62} className="mt-px ml-[14px] text-[19px] text-[#d6d6d6]">Search</T>
        <svg width="70" height="36" viewBox="0 0 70 36" className="mt-[2px] mr-[6px] ml-auto" fill="none">
          {burst(10, 10, 9, "#d8843c")}{burst(61, 14, 7.5, "#e0a23c")}
          <circle cx="10" cy="10" r="1.5" fill="#e04f2f" /><circle cx="61" cy="14" r="3.2" fill="#ffc23d" />
          <path d="M48 8 55 31H45Z" fill="#a9a2b8" />
          <path d="M22 10 50 12 46 33 18 30Z" fill="#efeaf3" />
          <path d="M23 6 51 8 49 17 20 15.5Z" fill="#c9302c" />
          <path d="M22 20 46 22M21.5 24 45 26M21 28 44 30M26 17 24 31M32 17.5 30 31.5M38 18 36 32M44 18.5 42 32" stroke="#5a5260" strokeWidth="1" />
          <path d="M26 10Q24 4 27.5 4T29 8M35 11Q33 4.5 36.5 4.5T38 9M44 11.5Q42 5 45.5 5T47 9.5" stroke="#9a93a6" strokeWidth="1.4" />
        </svg>
      </div>
      <div className="ml-1 flex pt-[3px]">
        <App36>
          <defs><linearGradient id="tv" x1="0" y1="0" x2="1" y2="1"><stop offset="0" stopColor="#fff" /><stop offset="1" stopColor="#d9d9d9" /></linearGradient></defs>
          <rect x="9" y="1" width="27" height="25" rx="1" fill="url(#tv)" />
          <rect x="0" y="10" width="27" height="24" rx="1" fill="#6a6a6a" />
          <path d="M9 10H27V26H9Z" fill="#b5b5b5" />
        </App36>
        <App36>
          <defs>
            <linearGradient id="cpa" x1="0" y1="0" x2="0" y2="1"><stop offset="0" stopColor="#1e9af0" /><stop offset=".5" stopColor="#26a9a0" /><stop offset="1" stopColor="#f3d514" /></linearGradient>
            <linearGradient id="cpb" x1="1" y1="0" x2="0" y2="1"><stop offset="0" stopColor="#a44af0" /><stop offset=".5" stopColor="#ef5a90" /><stop offset="1" stopColor="#ffa45c" /></linearGradient>
          </defs>
          <path d="M18 1H25Q28 2 28.5 8L30 11H21L17 20 18 8Z" fill="#1650c8" />
          <path d="M17 33H10Q8 32 7 24L12 24 18 14 17 26 20 33Z" fill="#f4633a" />
          <path d="M9 1H22Q18 3 16.5 10L13 22Q12 24.5 8 24.5H4Q-1 24 .5 18L4 6Q5.5 1.5 9 1Z" fill="url(#cpa)" />
          <path d="M27 34H15Q18 32 19.5 25L23 13Q24 10.5 28 10.5H32Q37 11 35.5 17L32 29Q30.5 33.5 27 34Z" fill="url(#cpb)" />
        </App36>
        <App36>
          <path d="M9 8V1.5H27V8" fill="none" stroke="#35b4e4" strokeWidth="1.8" />
          <path d="M0 5H35.5V32Q35.5 36 31 36H4.5Q0 36 0 32Z" fill="#f1f1f1" />
          <path d="M10.5 13H17.5V20H10.5Z" fill="#f25022" /><path d="M18.5 13H25.5V20H18.5Z" fill="#7fba00" /><path d="M10.5 21H17.5V28H10.5Z" fill="#00a4ef" /><path d="M18.5 21H25.5V28H18.5Z" fill="#ffb900" />
        </App36>
        <App36 running>
          <path d="M0 4Q0 2 2 2H11Q13 2 14 4L15 6 12 12H0Z" fill="#d99a0b" />
          <path d="M0 9Q9 8.5 11 7L14 5H34Q36 5 36 7V34H0Z" fill="#fdcb3f" />
          <path d="M6 34V27Q7 24 10 24H27Q30 24 30 27V34Z" fill="#1470c4" /><path d="M11 29.3H25" stroke="#0b4b8f" strokeWidth="1.6" />
        </App36>
        <App36>
          <defs>
            <linearGradient id="edA" x1="0" y1="0" x2="1" y2=".6"><stop offset="0" stopColor="#23a5dc" /><stop offset=".5" stopColor="#34c6c4" /><stop offset="1" stopColor="#5fe04a" /></linearGradient>
          </defs>
          <path d="M0 16Q4 9 12 10 9 20 14 26 22 30 33 27 27 36 18 36 0 34 0 16Z" fill="#1474c8" />
          <path d="M12 20Q14 31 33 27 27 36 18 36 10 34 9 24Z" fill="#0f4c98" />
          <path d="M0 16Q3 0 18 0 33 1 36 15 36 24 28 24 21 24 21 20 23 18 22 15 19 9 11 9 4 10 0 16Z" fill="url(#edA)" />
          <circle cx="8.500" cy="27" r="9" fill="#f0f0f0" /><circle cx="8.500" cy="24" r="2.800" fill="#8a8a8a" /><path d="M3.5 28H13.5Q13.5 32 8.5 32T3.5 28Z" fill="#8a8a8a" />
        </App36>
        <App36>
          <defs><linearGradient id="ph" x1="0" y1="0" x2="1" y2="1"><stop offset="0" stopColor="#e0eeea" /><stop offset=".5" stopColor="#7fc4d4" /><stop offset="1" stopColor="#6fb4f2" /></linearGradient></defs>
          <path d="M0 0H36V36H0Z" fill="url(#ph)" />
          <path d="M8.500 28V15Q9 7 17.500 6.500 26.500 7 27 15.500L28 21H26V25.500H22M8.500 28H21M12.500 25H21.500V23Q23.500 19 22.500 15.500 21 11 17 11 12.500 11.500 11.800 16 12 20 14.500 22V25" fill="none" stroke="#fff" strokeWidth="1.700" />
        </App36>
        <App36>
          <rect width="36" height="36" rx="2.5" fill="#107c10" />
          <g fill="#fff">
            <path d="M11 6Q18 2 25 6 22 5.500 18 8.300 14 5.500 11 6Z" />
            <path d="M8.500 7.800Q11 7.500 14.500 11.500 8 19 7 27 1.500 19.500 4.500 12.500 6 9.500 8.500 7.800Z" />
            <path d="M27.500 7.800Q25 7.500 21.500 11.500 28 19 29 27 34.500 19.500 31.500 12.500 30 9.500 27.500 7.800Z" />
            <path d="M18 15Q25 21 27.500 28.500 23.500 32.300 18 32.300T8.500 28.500Q11 21 18 15Z" />
          </g>
        </App36>
        <App36 running>
          <defs><linearGradient id="wps" x1="0" y1="0" x2="1" y2="1"><stop offset="0" stopColor="#ff1c2e" /><stop offset="1" stopColor="#ff6a00" /></linearGradient></defs>
          <circle cx="18" cy="18" r="18" fill="url(#wps)" />
          <path d="M6.500 12H16M8 12 13.500 26 20 13 24 26 30 11H20" fill="none" stroke="#fff" strokeWidth="2.800" strokeLinejoin="round" />
          <rect x="26.500" y="-1" width="13" height="13.500" rx="2" fill="#ef6a6a" /><path d="M30 4Q30 1.500 33 1.500T36.300 4.500Q36 7 33 7 30 7.200 30 9 30.500 10.500 33 10.300L36 10" stroke="#fff" strokeWidth="1.300" fill="none" />
        </App36>
        <App36 running>
          <rect x="2" y="2" width="32" height="32" rx="2" fill="#0a66c2" />
          <circle cx="11" cy="11.500" r="2.300" fill="#fff" /><path d="M9 15.500H13V27H9ZM15.500 15.500H19V17Q21 15 23.500 15.300 27 16 27 20V27H23.200V21Q23 18.500 21.300 18.500 19.300 19 19.300 21.500V27H15.500Z" fill="#fff" />
          <rect x="16" y="-7" width="31" height="24" rx="12" fill="#d99ae0" /><text x="22.500" y="11" fontSize="16" textLength="18" fill="#111">23</text>
        </App36>
        <div className="-mt-[2px] ml-[3px] flex h-[64px] w-[60px] shrink-0 pt-[3px]">
          <div className="flex h-[60px] w-[53px] flex-col items-center rounded-[6px] border border-[#424242] bg-[#2d2d2d] pt-[11px] pl-[7px]">
            <svg width="28" height="36" viewBox="0 0 28 36">
              <path d="M15 0H28V36H15Z" fill="#d58f15" /><path d="M8 9H20V36H8Z" fill="#f0c02f" /><path d="M0 18H12V36H0Z" fill="#f8dc6a" /><path d="M15 0H28V9H15Z" fill="#e3a512" />
            </svg>
            <div className="mt-[6px] h-[5px] w-6 shrink-0 rounded-full bg-[#d99ae0]" />
          </div>
          <div className="h-[60px] w-[7px] rounded-r-[6px] border-y border-r border-[#3c3c3c] bg-[#2b2b2b]" />
        </div>
        <App36 running className="ml-[3px]">
          <path d="M18 18 2.4 9A18 18 0 0 1 33.6 9Z" fill="#e33b2e" /><path d="M2.4 9 10.2 22.5 18 27 25.8 22.5 18 36A18 18 0 0 1 2.4 9Z" fill="#2ba24c" /><path d="M25.8 22.5 18 36A18 18 0 0 0 33.6 9H18Z" fill="#fcc31e" />
          <circle cx="18" cy="18" r="9" fill="#fff" /><circle cx="18" cy="18" r="7.2" fill="#2f7cf0" />
        </App36>
      </div>
      <div className="ml-auto flex pr-[30px]">
        <svg width="17" height="10" viewBox="0 0 17 10" className="mt-[31px]" fill="none" stroke="#fff" strokeWidth="1.8"><path d="M1 9 8.5 1.5 16 9" /></svg>
        <svg width="24" height="16" viewBox="0 0 24 16" className="mt-[29px] ml-[27px]">
          <path d="M5 5Q8 0 13 .5 18 1 19 5L12 11Z" fill="#a3a3a3" /><path d="M5 15.5Q0 15 0 10 1 5 6 4.5 9 4 11 6L20 10 12 15.5Z" fill="#c9c9c9" /><path d="M2 14 14 7Q17 4.5 20 6.5 24 8 24 11.5 23 15.5 19 15.5H5Q3 15.5 2 14Z" fill="#fff" />
        </svg>
        <svg width="24" height="25" viewBox="0 0 24 25" className="mt-[25px] ml-[24px]" fill="none" stroke="#fff" strokeWidth="1.3">
          <path d="M.7 12Q2 2 11.5 1 19 1 22.5 8M22.7 1V8H15.5M1.5 24V17.5H8.5M1.5 17.5Q5 24 12 24" /><circle cx="18" cy="18.5" r="6" fill="#ff9b0a" stroke="none" />
        </svg>
        <div className="mt-[14px] ml-[28px] flex w-[34px] flex-col items-center leading-[23px]"><T w={34}>ENG</T><T w={16}>IN</T></div>
        <svg width="24" height="18" viewBox="0 0 24 18" className="mt-[27px] ml-[28px]" fill="none" stroke="#fff" strokeWidth="1.7">
          <path d="M.7 6.5Q6 1 12 1T23.3 6.5M4 10.5Q8 6 12 6T20 10.5M7.5 13.5Q12 9 16.5 13.5" /><circle cx="12" cy="15.5" r="2" fill="#fff" stroke="none" />
        </svg>
        <svg width="24" height="20" viewBox="0 0 24 20" className="mt-[26px] ml-3" fill="none" stroke="#fff" strokeWidth="1.5">
          <path d="M1 6.5H5L10.5 1.5V18.5L5 13.5H1ZM13.5 6.5Q15.5 10 13.5 13.5M16.5 4Q20 10 16.5 16M19.5 1Q26 10 19.5 19" strokeLinejoin="round" />
        </svg>
        <svg width="24" height="16" viewBox="0 0 24 16" className="mt-[29px] ml-3"><rect x=".8" y=".8" width="19.5" height="14" rx="3" fill="none" stroke="#fff" strokeWidth="1.6" /><rect x="3.5" y="3.5" width="10" height="8.7" fill="#fff" /><path d="M21.5 5Q24 5.5 24 8T21.5 10.5Z" fill="#fff" /></svg>
        <div className="mt-[12px] ml-[25px] flex w-[92px] flex-col items-end leading-6"><T w={43}>14:25</T><T w={92}>27-12-2024</T></div>
      </div>
    </footer>
  );
}

export default function App() {
  return (
    <div className="flex h-[1080px] w-[1920px] flex-col overflow-hidden bg-[#f3f2f1] font-['Open_Sans','Noto_Sans',sans-serif]">
      <TitleBar />
      <Ribbon />
      <div className="flex h-[732px]">
        <Rail />
        <div className="flex w-[1268px] shrink-0 flex-col">
          <Canvas />
          <PageTabs />
        </div>
        <Filters />
        <Visualizations />
        <DataPane />
      </div>
      <StatusBar />
      <Taskbar />
    </div>
  );
}
